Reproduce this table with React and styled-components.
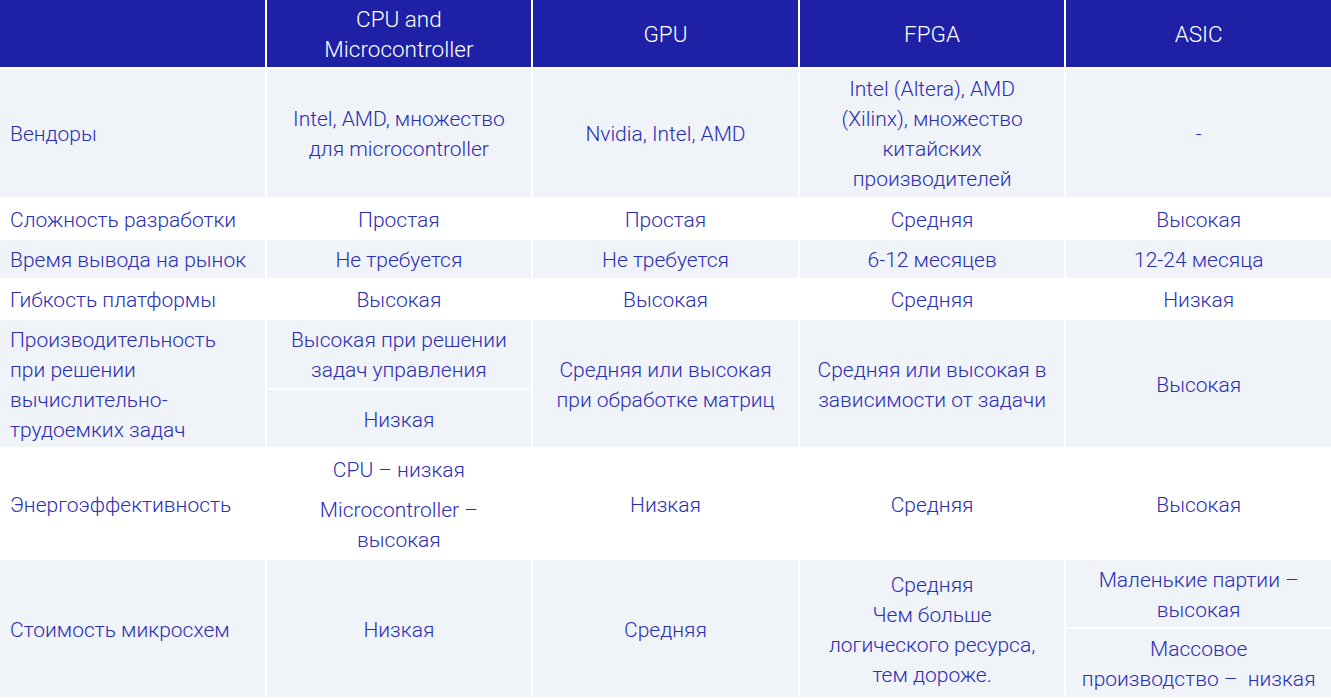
import React from "react";
import styled, { createGlobalStyle } from "styled-components";

const Global = createGlobalStyle`
  html, body { margin: 0; padding: 0; background: #ffffff; }
  body { font-family: Roboto, "Liberation Sans", sans-serif; }
`;

const Table = styled.div`
  display: grid;
  width: 1331px;
  grid-template-columns: repeat(5, 1fr);
  grid-template-rows: 67px 128px 39px 38px 38px 68px 57px 109px 67px 68px;
  gap: 2px;
  background: #ffffff;
  font-family: Roboto, "Liberation Sans", sans-serif;
  font-weight: 300;
  font-size: 21px;
  line-height: 30px;
`;

const HeadCell = styled.div`
  background: #1e21a5;
  color: #ffffff;
  display: flex;
  align-items: center;
  justify-content: center;
  text-align: center;
  padding: 1px 12px 0;
  font-size: 22.5px;
`;

const Cell = styled.div`
  background: ${(p) => (p.$alt ? "#f0f3f7" : "#ffffff")};
  color: #2a2eb6;
  display: flex;
  flex-direction: column;
  align-items: ${(p) => (p.$label ? "flex-start" : "center")};
  justify-content: center;
  text-align: ${(p) => (p.$label ? "left" : "center")};
  padding: ${(p) => (p.$label ? "2px 10px 0" : "2px 14px 0")};
  grid-row: ${(p) => (p.$span ? `span ${p.$span}` : "auto")};
`;

const Para = styled.div`
  & + & { margin-top: 10px; }
`;

const Line = styled.span`
  display: block;
  white-space: nowrap;
`;

const L = ({ children }) => <Line>{children}</Line>;

export default function App() {
  return (
    <>
      <Global />
      <Table>
        <HeadCell />
        <HeadCell>
          <div>
            <L>CPU and</L>
            <L>Microcontroller</L>
          </div>
        </HeadCell>
        <HeadCell>GPU</HeadCell>
        <HeadCell>FPGA</HeadCell>
        <HeadCell>ASIC</HeadCell>

        <Cell $alt $label>Вендоры</Cell>
        <Cell $alt>
          <L>Intel, AMD, множество</L>
          <L>для microcontroller</L>
        </Cell>
        <Cell $alt>Nvidia, Intel, AMD</Cell>
        <Cell $alt>
          <L>Intel (Altera), AMD</L>
          <L>(Xilinx), множество</L>
          <L>китайских</L>
          <L>производителей</L>
        </Cell>
        <Cell $alt>-</Cell>

        <Cell $label>Сложность разработки</Cell>
        <Cell>Простая</Cell>
        <Cell>Простая</Cell>
        <Cell>Средняя</Cell>
        <Cell>Высокая</Cell>

        <Cell $alt $label>Время вывода на рынок</Cell>
        <Cell $alt>Не требуется</Cell>
        <Cell $alt>Не требуется</Cell>
        <Cell $alt>6-12 месяцев</Cell>
        <Cell $alt>12-24 месяца</Cell>

        <Cell $label>Гибкость платформы</Cell>
        <Cell>Высокая</Cell>
        <Cell>Высокая</Cell>
        <Cell>Средняя</Cell>
        <Cell>Низкая</Cell>

        <Cell $alt $label $span={2}>
          <L>Производительность</L>
          <L>при решении</L>
          <L>вычислительно-</L>
          <L>трудоемких задач</L>
        </Cell>
        <Cell $alt>
          <L>Высокая при решении</L>
          <L>задач управления</L>
        </Cell>
        <Cell $alt $span={2}>
          <L>Средняя или высокая</L>
          <L>при обработке матриц</L>
        </Cell>
        <Cell $alt $span={2}>
          <L>Средняя или высокая в</L>
          <L>зависимости от задачи</L>
        </Cell>
        <Cell $alt $span={2}>Высокая</Cell>
        <Cell $alt>Низкая</Cell>

        <Cell $label>Энергоэффективность</Cell>
        <Cell>
          <Para>
            <L>CPU – низкая</L>
          </Para>
          <Para>
            <L>Microcontroller –</L>
            <L>высокая</L>
          </Para>
        </Cell>
        <Cell>Низкая</Cell>
        <Cell>Средняя</Cell>
        <Cell>Высокая</Cell>

        <Cell $alt $label $span={2}>Стоимость микросхем</Cell>
        <Cell $alt $span={2}>Низкая</Cell>
        <Cell $alt $span={2}>Средняя</Cell>
        <Cell $alt $span={2}>
          <L>Средняя</L>
          <L>Чем больше</L>
          <L>логического ресурса,</L>
          <L>тем дороже.</L>
        </Cell>
        <Cell $alt>
          <L>Маленькие партии –</L>
          <L>высокая</L>
        </Cell>
        <Cell $alt>
          <L>Массовое</L>
          <L>производство –{"\u00a0"} низкая</L>
        </Cell>
      </Table>
    </>
  );
}
